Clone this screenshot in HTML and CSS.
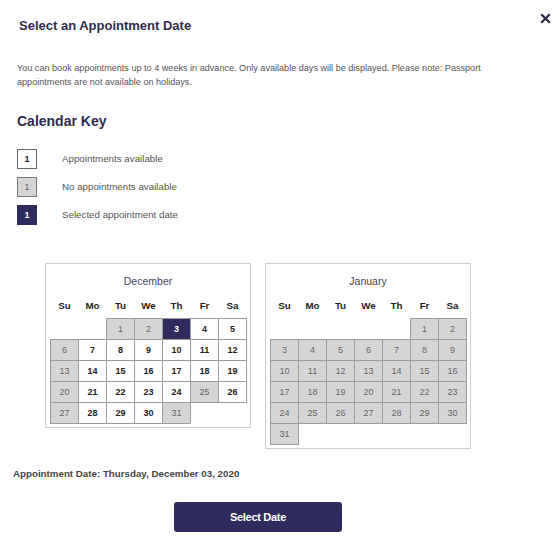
FILE: index.html
```html
<!DOCTYPE html>
<html lang="en">
<head>
<meta charset="utf-8">
<title>Select an Appointment Date</title>
<link rel="stylesheet" href="styles.css">
</head>
<body>
<div class="modal">
  <header class="top">
    <h1 class="title">Select an Appointment Date</h1>
    <button class="close" aria-label="Close">
      <svg width="11" height="11" viewBox="0 0 11 11"><path d="M1.2 1.2 L9.8 9.8 M9.8 1.2 L1.2 9.8" stroke="#2b2a48" stroke-width="2.3" stroke-linecap="butt" fill="none"/></svg>
    </button>
  </header>
  <p class="intro">You can book appointments up to 4 weeks in advance. Only available days will be displayed. Please note: Passport appointments are not available on holidays.</p>

  <h2 class="key-title">Calendar Key</h2>
  <ul class="key">
    <li><span class="swatch avail">1</span>Appointments available</li>
    <li><span class="swatch none">1</span>No appointments available</li>
    <li><span class="swatch chosen-sw">1</span>Selected appointment date</li>
  </ul>

  <div class="cals">
    <section class="cal">
      <h3 class="month">December</h3>
      <div class="wk"><span>Su</span><span>Mo</span><span>Tu</span><span>We</span><span>Th</span><span>Fr</span><span>Sa</span></div>
      <div class="days">
        <span class="e"></span><span class="e"></span>
        <span class="d off">1</span><span class="d off">2</span><span class="d sel">3</span><span class="d">4</span><span class="d">5</span>
        <span class="d off">6</span><span class="d">7</span><span class="d">8</span><span class="d">9</span><span class="d">10</span><span class="d">11</span><span class="d">12</span>
        <span class="d off">13</span><span class="d">14</span><span class="d">15</span><span class="d">16</span><span class="d">17</span><span class="d">18</span><span class="d">19</span>
        <span class="d off">20</span><span class="d">21</span><span class="d">22</span><span class="d">23</span><span class="d">24</span><span class="d off">25</span><span class="d">26</span>
        <span class="d off">27</span><span class="d">28</span><span class="d">29</span><span class="d">30</span><span class="d off">31</span>
      </div>
    </section>
    <section class="cal">
      <h3 class="month">January</h3>
      <div class="wk"><span>Su</span><span>Mo</span><span>Tu</span><span>We</span><span>Th</span><span>Fr</span><span>Sa</span></div>
      <div class="days">
        <span class="e"></span><span class="e"></span><span class="e"></span><span class="e"></span><span class="e"></span>
        <span class="d off">1</span><span class="d off">2</span>
        <span class="d off">3</span><span class="d off">4</span><span class="d off">5</span><span class="d off">6</span><span class="d off">7</span><span class="d off">8</span><span class="d off">9</span>
        <span class="d off">10</span><span class="d off">11</span><span class="d off">12</span><span class="d off">13</span><span class="d off">14</span><span class="d off">15</span><span class="d off">16</span>
        <span class="d off">17</span><span class="d off">18</span><span class="d off">19</span><span class="d off">20</span><span class="d off">21</span><span class="d off">22</span><span class="d off">23</span>
        <span class="d off">24</span><span class="d off">25</span><span class="d off">26</span><span class="d off">27</span><span class="d off">28</span><span class="d off">29</span><span class="d off">30</span>
        <span class="d off">31</span>
      </div>
    </section>
  </div>

  <p class="chosen">Appointment Date: Thursday, December 03, 2020</p>
  <button class="select">Select Date</button>
</div>
</body>
</html>
```

FILE: styles.css
```css
html, body {
  margin: 0;
  padding: 0;
  background: #ffffff;
}

body {
  font-family: "Liberation Sans", Arial, sans-serif;
  color: #333;
}

.modal {
  width: 560px;
}

.top {
  display: flex;
  justify-content: space-between;
  align-items: flex-start;
  padding: 17.5px 9px 0 19px;
}

.title {
  margin: 0;
  font-size: 13px;
  line-height: 15px;
  font-weight: bold;
  color: #2e2d4d;
}

.close {
  margin-top: -4.5px;
  padding: 0;
  border: 0;
  background: none;
  width: 11px;
  height: 11px;
  display: block;
}

.close svg {
  display: block;
}

.intro {
  margin: 28px 0 0;
  padding: 0 40px 0 17px;
  font-size: 9.1px;
  line-height: 14.5px;
  color: #555;
}

.key-title {
  margin: 23px 0 0 17px;
  font-size: 14px;
  line-height: 16px;
  font-weight: bold;
  color: #2e2d4d;
}

.key {
  list-style: none;
  margin: 20.5px 0 0 17px;
  padding: 0;
  display: flex;
  flex-direction: column;
  gap: 8px;
}

.key li {
  display: flex;
  align-items: center;
  font-size: 9.75px;
  line-height: 14px;
  color: #555;
}

.swatch {
  width: 20px;
  height: 20px;
  box-sizing: border-box;
  border: 1px solid #666;
  display: flex;
  align-items: center;
  justify-content: center;
  font-size: 9px;
  margin-right: 25px;
}

.swatch.avail {
  background: #fff;
  color: #222;
  font-weight: bold;
}

.swatch.none {
  background: #d5d5d5;
  color: #666;
  border-color: #777;
}

.swatch.chosen-sw {
  background: #2f2b5f;
  border-color: #2f2b5f;
  color: #fff;
  font-weight: bold;
}

.cals {
  display: flex;
  align-items: flex-start;
  gap: 14px;
  margin: 38px 0 0 45px;
}

.cal {
  width: 206px;
  box-sizing: border-box;
  border: 1px solid #cfcfcf;
  padding: 10px 4px 4px 4px;
}

.month {
  margin: 0;
  text-align: center;
  font-size: 10.5px;
  line-height: 14px;
  font-weight: normal;
  color: #44435a;
}

.wk {
  display: grid;
  grid-template-columns: repeat(7, 28px);
  margin: 10px 0 4px;
  height: 16px;
  line-height: 16px;
  font-size: 9.75px;
  font-weight: bold;
  color: #222;
  text-align: center;
}

.wk span {
  padding-left: 1px;
}

.days {
  display: grid;
  grid-template-columns: repeat(7, 28px);
  grid-auto-rows: 21px;
}

.d {
  width: 29px;
  height: 22px;
  box-sizing: border-box;
  border: 1px solid #9d9d9d;
  display: flex;
  align-items: center;
  justify-content: center;
  font-size: 9px;
  font-weight: bold;
  color: #222;
  background: #fff;
}

.d.off {
  background: #d5d5d5;
  font-weight: normal;
  color: #666;
}

.d.sel {
  background: #2f2b5f;
  color: #fff;
  font-weight: bold;
}

.chosen {
  margin: 18px 0 0 13px;
  font-size: 9.75px;
  line-height: 14px;
  font-weight: bold;
  color: #444;
}

.select {
  display: block;
  margin: 21px 0 0 174px;
  width: 168px;
  height: 30px;
  border: 0;
  border-radius: 3px;
  background: #2f2b5e;
  color: #fff;
  font-family: "Liberation Sans", Arial, sans-serif;
  font-size: 11px;
  font-weight: bold;
  letter-spacing: -0.3px;
  padding: 0;
}
```
